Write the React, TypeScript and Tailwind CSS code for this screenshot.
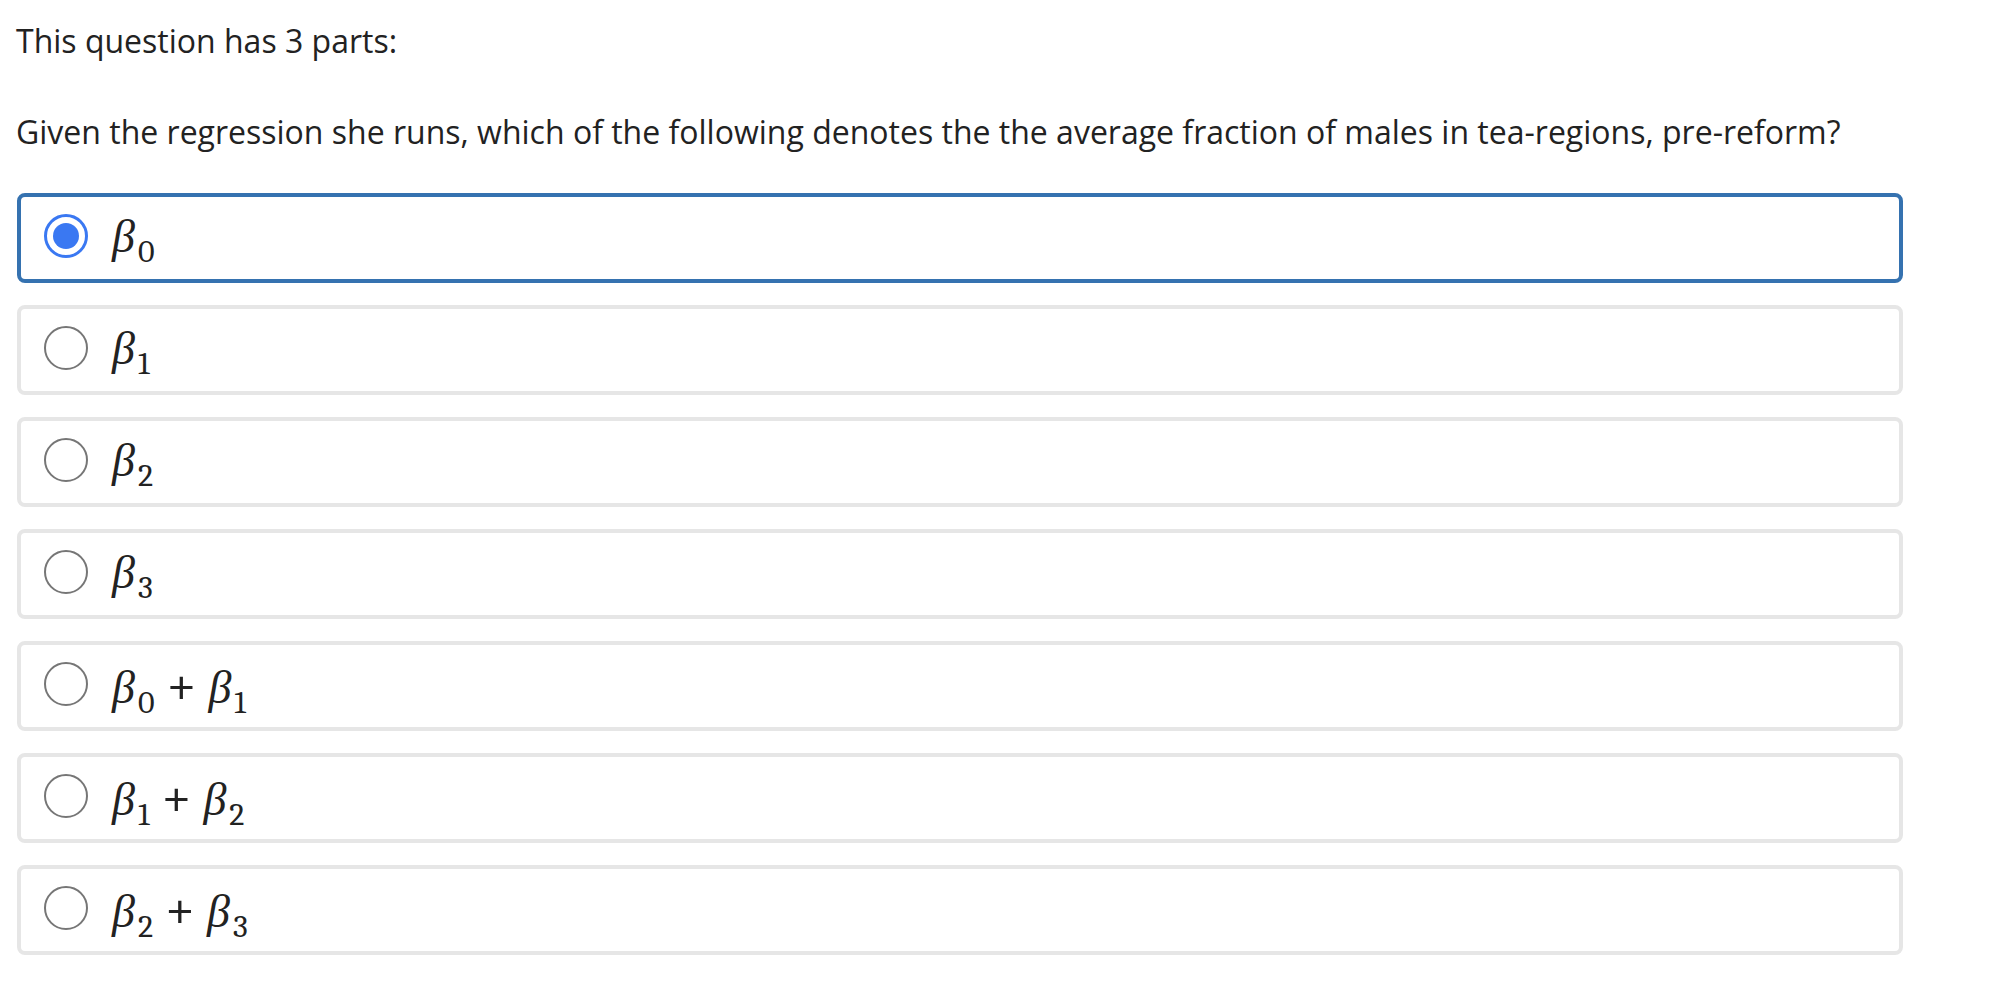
import React from 'react';

type Term = { n: string };

const Beta: React.FC<Term> = ({ n }) => (
  <span className="inline-flex items-baseline">
    <span className="italic text-[46px] leading-none">β</span>
    <span className="relative top-[10px] ml-[3px] text-[32px] leading-none">{n}</span>
  </span>
);

const Plus = () => <span className="mx-[12px] text-[54px] font-light leading-none">+</span>;

const options: string[][] = [['0'], ['1'], ['2'], ['3'], ['0', '1'], ['1', '2'], ['2', '3']];

const Radio: React.FC<{ checked: boolean }> = ({ checked }) =>
  checked ? (
    <span className="flex h-[44px] w-[44px] shrink-0 items-center justify-center rounded-full border-[3px] border-[#3a78f2] bg-white">
      <span className="h-[26px] w-[26px] rounded-full bg-[#3a78f2]" />
    </span>
  ) : (
    <span className="h-[44px] w-[44px] shrink-0 rounded-full border-2 border-[#767676] bg-white" />
  );

export default function App() {
  const selected = 0;

  return (
    <div className="min-h-screen bg-white pt-[17px] pl-[16px] text-[#222] font-['Open_Sans',sans-serif]">
      <p className="text-[32px] leading-[48px]">This question has 3 parts:</p>
      <p className="mt-[43px] text-[32px] leading-[48px]">
        Given the regression she runs, which of the following denotes the the average fraction of males in tea-regions,
        pre-reform?
      </p>

      <div className="mt-[37px] flex w-[1887px] flex-col gap-[22px] pl-px">
        {options.map((terms, i) => (
          <label
            key={i}
            className={`flex h-[90px] items-center gap-[24px] rounded-[8px] border-4 bg-white pl-[23px] pb-[5px] ${
              i === selected ? 'border-[#3572b0]' : 'border-[#e6e6e6]'
            }`}
          >
            <Radio checked={i === selected} />
            <span className="mt-[4px] flex items-baseline font-serif text-[#222]">
              {terms.map((t, j) => (
                <React.Fragment key={t}>
                  {j > 0 && <Plus />}
                  <Beta n={t} />
                </React.Fragment>
              ))}
            </span>
          </label>
        ))}
      </div>
    </div>
  );
}
